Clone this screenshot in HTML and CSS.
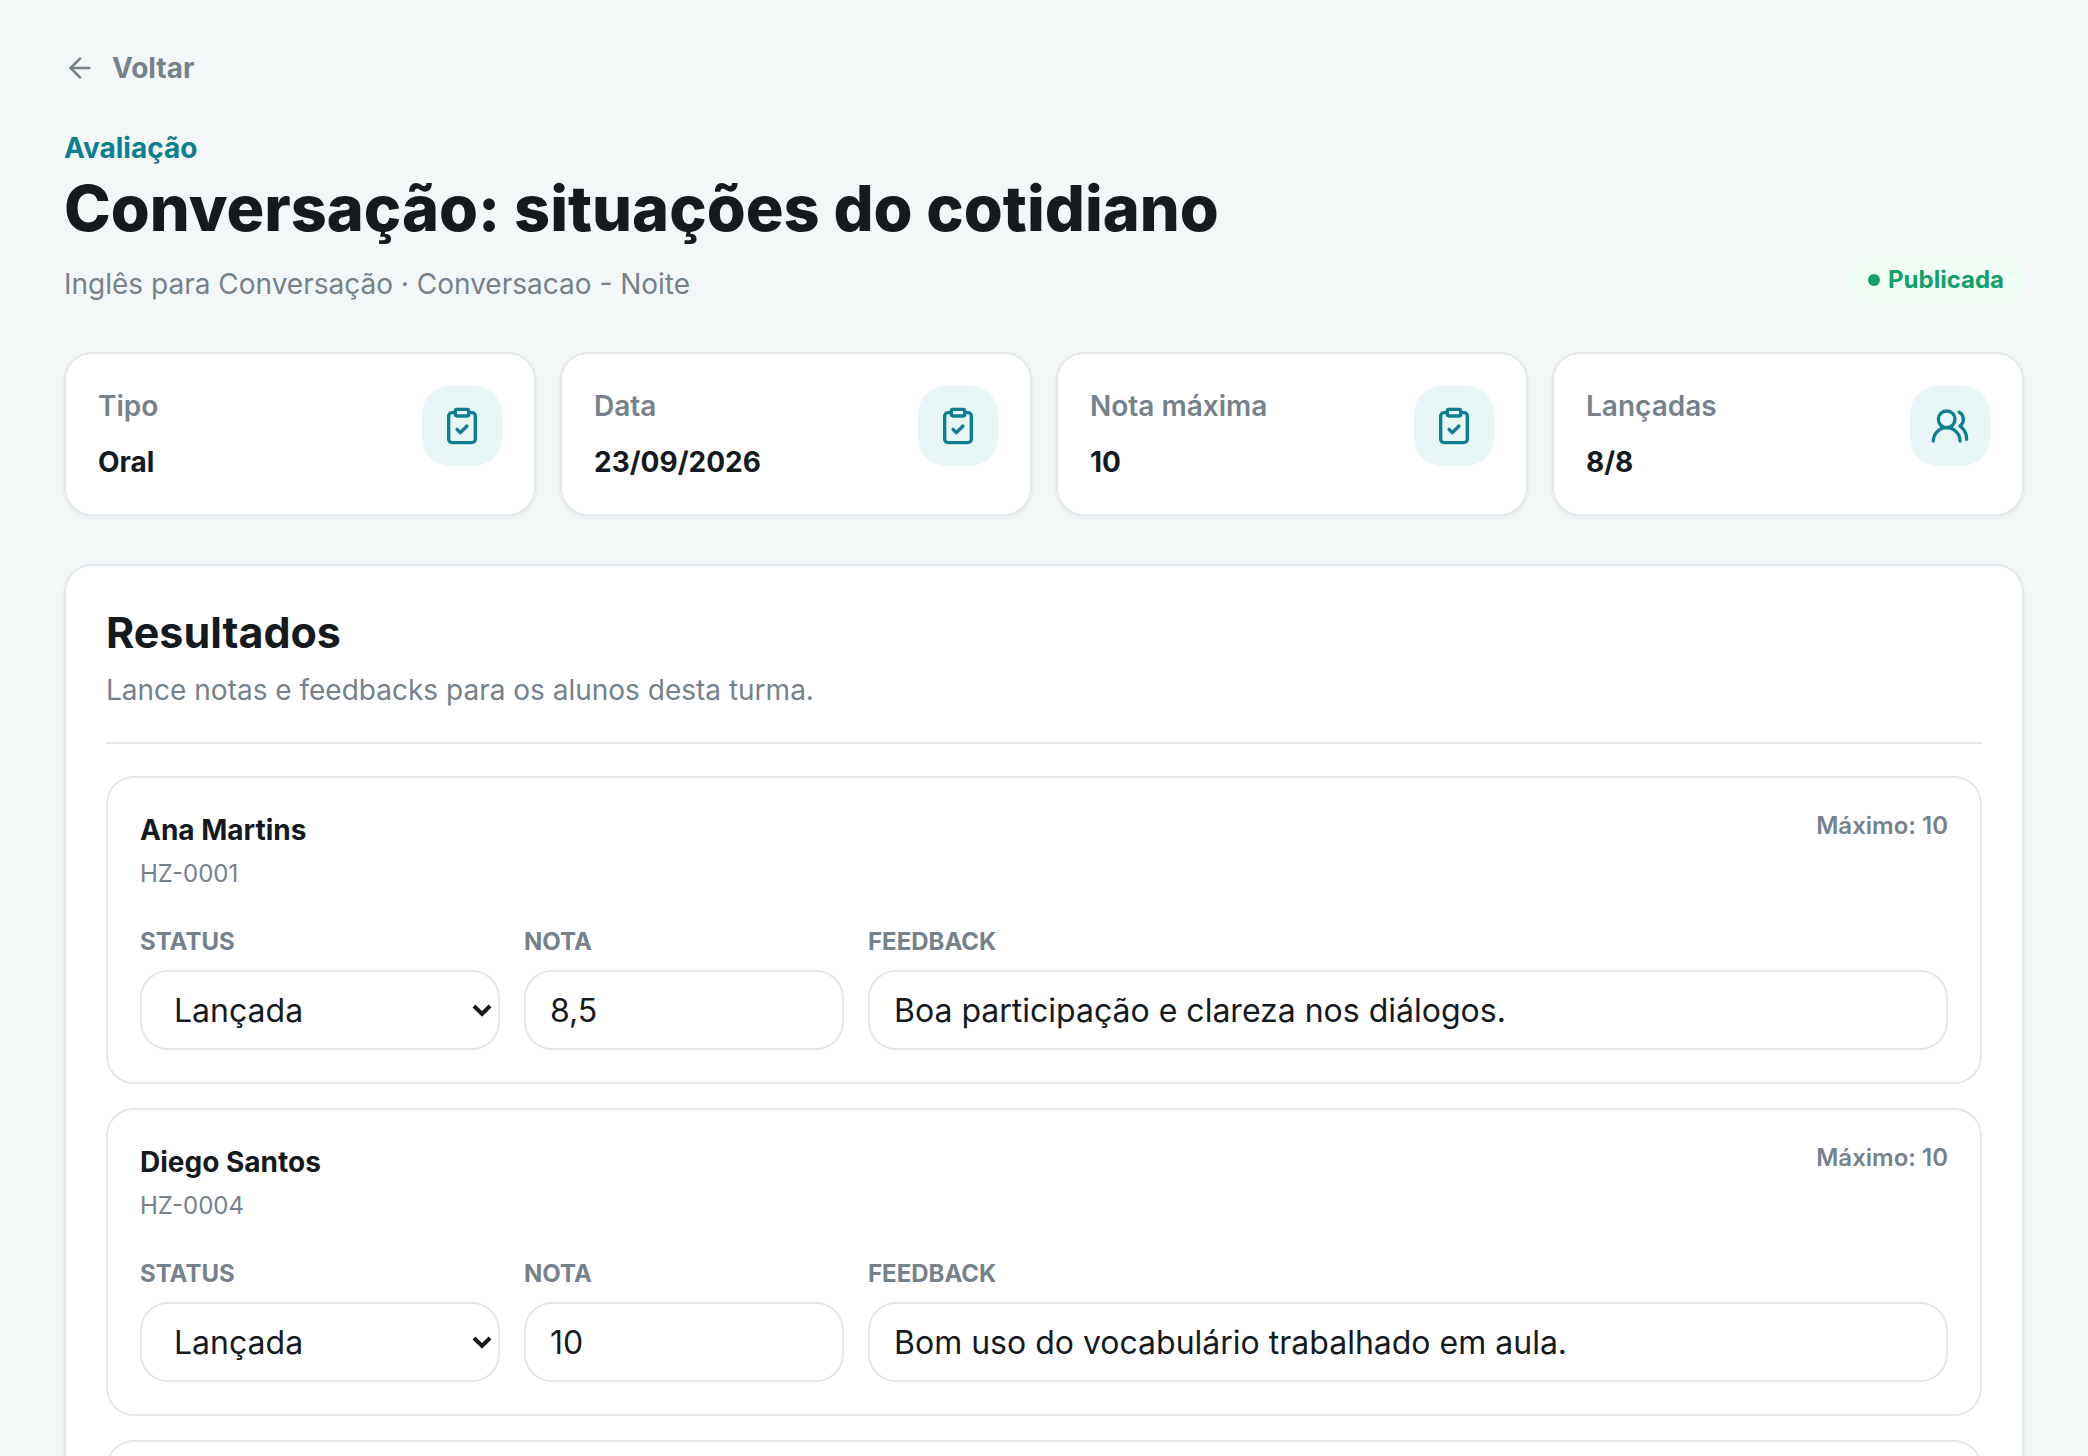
FILE: index.html
```html
<!DOCTYPE html>
<html lang="pt-BR">
<head>
    <meta charset="UTF-8">
    <meta name="viewport" content="width=device-width, initial-scale=1.0">
    <title>Conversação: situações do cotidiano</title>
    <link rel="stylesheet" href="styles.css">
</head>
<body>
    <!-- Shared icons -->
    <svg class="sprite" aria-hidden="true">
        <symbol id="icon-clipboard" viewBox="0 0 24 24">
            <rect width="8" height="4" x="8" y="2" rx="1" ry="1"/>
            <path d="M16 4h2a2 2 0 0 1 2 2v14a2 2 0 0 1-2 2H6a2 2 0 0 1-2-2V6a2 2 0 0 1 2-2h2"/>
            <path d="m9 14 2 2 4-4"/>
        </symbol>
        <symbol id="icon-users" viewBox="0 0 24 24">
            <path d="M18 21a8 8 0 0 0-16 0"/>
            <circle cx="10" cy="8" r="5"/>
            <path d="M22 20c0-3.37-2-6.5-4-8a5 5 0 0 0-.45-8.3"/>
        </symbol>
        <symbol id="icon-chevron" viewBox="0 0 20 14">
            <path d="M2 3l8 8 8-8"/>
        </symbol>
    </svg>

    <main class="page">
        <a class="back-link" href="#">
            <svg class="back-icon" viewBox="0 0 24 24"><path d="m12 19-7-7 7-7"/><path d="M19 12H5"/></svg>
            Voltar
        </a>

        <header class="page-header">
            <div>
                <p class="eyebrow">Avaliação</p>
                <h1>Conversação: situações do cotidiano</h1>
                <p class="subtitle">Inglês para Conversação · Conversacao - Noite</p>
            </div>
            <span class="badge">Publicada</span>
        </header>

        <section class="stats">
            <div class="stat-card">
                <div>
                    <p class="stat-label">Tipo</p>
                    <p class="stat-value">Oral</p>
                </div>
                <span class="stat-icon"><svg><use href="#icon-clipboard"/></svg></span>
            </div>
            <div class="stat-card">
                <div>
                    <p class="stat-label">Data</p>
                    <p class="stat-value">23/09/2026</p>
                </div>
                <span class="stat-icon"><svg><use href="#icon-clipboard"/></svg></span>
            </div>
            <div class="stat-card">
                <div>
                    <p class="stat-label">Nota máxima</p>
                    <p class="stat-value">10</p>
                </div>
                <span class="stat-icon"><svg><use href="#icon-clipboard"/></svg></span>
            </div>
            <div class="stat-card">
                <div>
                    <p class="stat-label">Lançadas</p>
                    <p class="stat-value">8/8</p>
                </div>
                <span class="stat-icon"><svg><use href="#icon-users"/></svg></span>
            </div>
        </section>

        <section class="panel">
            <div class="panel-header">
                <h2>Resultados</h2>
                <p>Lance notas e feedbacks para os alunos desta turma.</p>
            </div>

            <div class="results">
                <article class="result">
                    <div class="result-header">
                        <div>
                            <h3>Ana Martins</h3>
                            <p class="code">HZ-0001</p>
                        </div>
                        <span class="max">Máximo: 10</span>
                    </div>
                    <div class="fields">
                        <div class="field">
                            <label for="status-1">Status</label>
                            <div class="select-wrap">
                                <select id="status-1"><option>Lançada</option></select>
                                <svg><use href="#icon-chevron"/></svg>
                            </div>
                        </div>
                        <div class="field">
                            <label for="nota-1">Nota</label>
                            <input type="text" id="nota-1" inputmode="decimal" value="8,5">
                        </div>
                        <div class="field">
                            <label for="feedback-1">Feedback</label>
                            <input type="text" id="feedback-1" value="Boa participação e clareza nos diálogos.">
                        </div>
                    </div>
                </article>

                <article class="result">
                    <div class="result-header">
                        <div>
                            <h3>Diego Santos</h3>
                            <p class="code">HZ-0004</p>
                        </div>
                        <span class="max">Máximo: 10</span>
                    </div>
                    <div class="fields">
                        <div class="field">
                            <label for="status-2">Status</label>
                            <div class="select-wrap">
                                <select id="status-2"><option>Lançada</option></select>
                                <svg><use href="#icon-chevron"/></svg>
                            </div>
                        </div>
                        <div class="field">
                            <label for="nota-2">Nota</label>
                            <input type="text" id="nota-2" inputmode="decimal" value="10">
                        </div>
                        <div class="field">
                            <label for="feedback-2">Feedback</label>
                            <input type="text" id="feedback-2" value="Bom uso do vocabulário trabalhado em aula.">
                        </div>
                    </div>
                </article>

                <article class="result"></article>
            </div>
        </section>
    </main>
</body>
</html>
```
FILE: styles.css
```css
:root {
    --bg: #f3f7f8;
    --card: #ffffff;
    --text: #151a1e;
    --muted: #75818b;
    --primary: #0c7f8e;
    --primary-soft: #e8f6f7;
    --border: #e2e7eb;
    --success: #149f6b;
    --success-soft: #effdf4;
    --radius: 28px;
}

* {
    margin: 0;
    padding: 0;
    box-sizing: border-box;
}

body {
    font-family: Inter, sans-serif;
    font-size: 28px;
    line-height: 40px;
    color: var(--text);
    background: var(--bg);
}

svg {
    fill: none;
    stroke: currentColor;
    stroke-width: 2;
    stroke-linecap: round;
    stroke-linejoin: round;
}

.sprite {
    display: none;
}

.page {
    height: 100vh;
    overflow: hidden;
    padding: 48px 64px 0;
}

.back-link {
    display: inline-flex;
    align-items: center;
    gap: 16px;
    color: var(--muted);
    font-weight: 700;
    text-decoration: none;
    vertical-align: top;
}

.back-icon {
    width: 32px;
    height: 32px;
}

/* Header */
.page-header {
    display: flex;
    justify-content: space-between;
    align-items: flex-end;
    margin-top: 40px;
}

.eyebrow {
    color: var(--primary);
    font-weight: 700;
}

h1 {
    margin: 0 0 16px;
    font-size: 63px;
    line-height: 80px;
    font-weight: 800;
}

.subtitle {
    color: var(--muted);
}

.badge {
    display: inline-flex;
    align-items: center;
    gap: 8px;
    padding: 8px 20px;
    border-radius: 24px;
    background: var(--success-soft);
    color: var(--success);
    font-size: 24px;
    line-height: 32px;
    font-weight: 700;
}

.badge::before {
    content: "";
    width: 12px;
    height: 12px;
    border-radius: 50%;
    background: currentColor;
}

/* Summary cards */
.stats {
    display: grid;
    grid-template-columns: repeat(4, 1fr);
    gap: 24px;
    margin-top: 48px;
}

.stat-card {
    display: flex;
    justify-content: space-between;
    align-items: flex-start;
    padding: 32px;
    background: var(--card);
    border: 2px solid var(--border);
    border-radius: var(--radius);
    box-shadow: 0 2px 4px rgba(0, 0, 0, 0.05);
}

.stat-label {
    color: var(--muted);
    font-weight: 600;
}

.stat-value {
    margin-top: 16px;
    font-weight: 700;
}

.stat-icon {
    display: grid;
    place-items: center;
    width: 80px;
    height: 80px;
    border-radius: var(--radius);
    background: var(--primary-soft);
    color: var(--primary);
}

.stat-icon svg {
    width: 40px;
    height: 40px;
}

/* Results */
.panel {
    margin-top: 48px;
    padding: 40px;
    background: var(--card);
    border: 2px solid var(--border);
    border-radius: var(--radius);
    box-shadow: 0 2px 4px rgba(0, 0, 0, 0.05);
}

.panel-header {
    padding-bottom: 32px;
    border-bottom: 2px solid var(--border);
}

h2 {
    font-size: 43px;
    line-height: 52px;
    font-weight: 700;
}

.panel-header p {
    margin-top: 12px;
    color: var(--muted);
}

.results {
    display: grid;
    gap: 24px;
    margin-top: 32px;
}

.result {
    min-height: 308px;
    padding: 32px;
    border: 2px solid var(--border);
    border-radius: var(--radius);
}

.result-header {
    display: flex;
    justify-content: space-between;
    align-items: flex-start;
}

h3 {
    font-size: 28px;
    font-weight: 700;
}

.code,
.max {
    color: var(--muted);
    font-size: 24px;
    line-height: 32px;
}

.code {
    margin-top: 8px;
}

.max {
    font-weight: 600;
}

.fields {
    display: grid;
    grid-template-columns: 360px 320px 1fr;
    gap: 24px;
    margin-top: 32px;
}

.field label {
    display: block;
    margin-bottom: 8px;
    color: var(--muted);
    font-size: 24px;
    line-height: 40px;
    font-weight: 700;
    text-transform: uppercase;
}

.field input,
.field select {
    display: block;
    width: 100%;
    height: 80px;
    padding: 0 24px;
    border: 2px solid var(--border);
    border-radius: var(--radius);
    background: var(--card);
    color: var(--text);
    font-family: inherit;
    font-size: 32px;
}

.field select {
    padding: 0 32px;
    appearance: none;
}

.select-wrap {
    position: relative;
}

.select-wrap svg {
    position: absolute;
    top: 33px;
    right: 8px;
    width: 20px;
    height: 14px;
    stroke-width: 4;
    stroke-linecap: butt;
    stroke-linejoin: miter;
    pointer-events: none;
}
```
